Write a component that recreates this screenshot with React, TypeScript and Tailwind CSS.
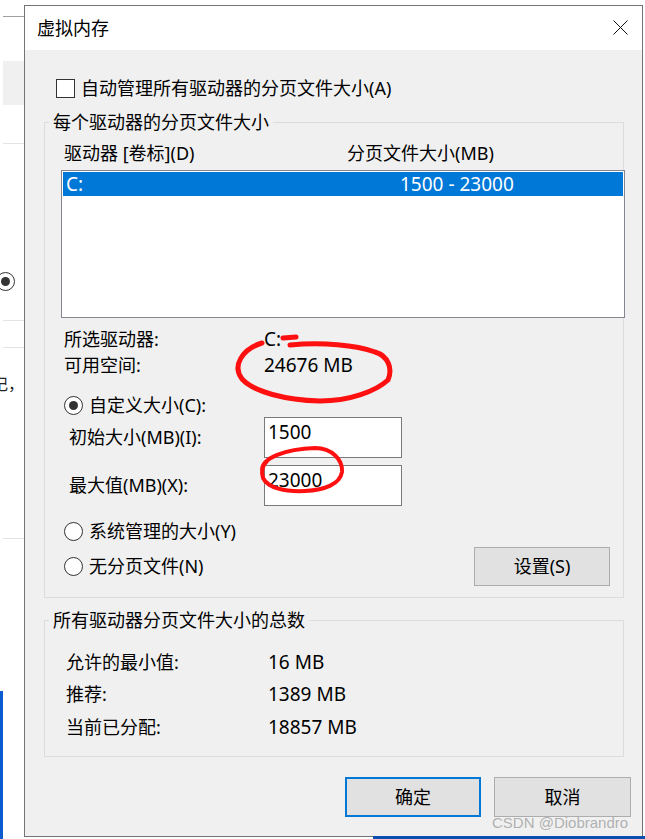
import React from 'react';

const Radio: React.FC<{ checked?: boolean }> = ({ checked }) => (
  <span className="flex h-[19px] w-[19px] shrink-0 items-center justify-center rounded-full border border-[#333] bg-white">
    {checked && <span className="h-[9px] w-[9px] rounded-full bg-[#333]" />}
  </span>
);

const GroupLabel: React.FC<{ children: React.ReactNode }> = ({ children }) => (
  <span className="absolute left-[4px] top-[-13px] bg-[#f0f0f0] px-[4px] leading-[24px]">{children}</span>
);

// background window peeking out on the left
const BackgroundStrip = () => (
  <div className="flex h-full w-[24px] shrink-0 flex-col overflow-hidden bg-white">
    <div className="ml-[3px] mt-[16px] h-px bg-[#a0a0a0]" />
    <div className="ml-[3px] mt-[44px] h-[44px] bg-[#f0f0f0]" />
    <div className="ml-[3px] mt-[38px] h-px bg-[#e3e3e3]" />
    <div className="ml-[-4px] mt-[128px] flex h-[19px] items-center">
      <Radio checked />
    </div>
    <div className="ml-[3px] mt-[29px] h-px bg-[#e3e3e3]" />
    <div className="ml-[3px] mt-[26px] h-px bg-[#e3e3e3]" />
    <div className="mt-[26px] flex h-[20px] justify-end whitespace-nowrap text-[16px] leading-[20px] text-[#222]">记，</div>
    <div className="ml-[3px] mt-[144px] h-px bg-[#e3e3e3]" />
    <div className="mt-[152px] w-[3px] flex-1 bg-[#0b5cd0]" />
  </div>
);

const Dialog = () => (
  <div className="mt-[5px] flex h-[832px] w-[619px] shrink-0 flex-col border border-[#747474] bg-[#f0f0f0]">
    {/* title bar */}
    <div className="flex h-[44px] shrink-0 items-center justify-between bg-white pl-[12px] pr-[14px]">
      <span className="leading-[24px]">虚拟内存</span>
      <svg width="15" height="15" viewBox="0 0 15 15" className="mb-[2px]">
        <path d="M0.5 0.5 L14.5 14.5 M14.5 0.5 L0.5 14.5" stroke="#111" strokeWidth="1" />
      </svg>
    </div>

    <div className="flex flex-col pl-[19px]">
      <div className="ml-[12px] mt-[26px] flex h-[24px] items-center gap-[6px]">
        <span className="h-[19px] w-[19px] border border-[#333] bg-white" />
        <span>自动管理所有驱动器的分页文件大小(A)</span>
      </div>

      {/* per drive group */}
      <div className="relative mt-[22px] flex h-[476px] w-[580px] flex-col border border-[#dcdcdc]">
        <GroupLabel>每个驱动器的分页文件大小</GroupLabel>
        <div className="mt-[18px] flex h-[24px] items-center pl-[19px]">
          <span className="w-[283px]">驱动器 [卷标](D)</span>
          <span>分页文件大小(MB)</span>
        </div>
        <div className="ml-[16px] mt-[5px] h-[148px] w-[564px] border border-[#828790] bg-white p-px">
          <div className="flex h-[24px] items-center bg-[#0078d7] pl-[3px] text-white">
            <span className="w-[334px] text-[19px]">C:</span>
            <span className="text-[19px]">1500 - 23000</span>
          </div>
        </div>

        <div className="mt-[8px] flex h-[26px] items-center pl-[19px]">
          <span className="w-[200px]">所选驱动器:</span>
          <span className="text-[19px]">C:</span>
        </div>
        <div className="flex h-[26px] items-center pl-[19px]">
          <span className="w-[200px]">可用空间:</span>
          <span className="text-[19px]">24676 MB</span>
        </div>

        <div className="mt-[16px] flex h-[22px] items-center gap-[6px] pl-[19px]">
          <Radio checked />
          <span>自定义大小(C):</span>
        </div>
        <div className="mt-px flex h-[41px] items-center pl-[24px]">
          <span className="w-[195px]">初始大小(MB)(I):</span>
          <div className="h-[41px] w-[138px] border border-[#7a7a7a] bg-white pl-[3px] pt-[2px] text-[19px] leading-[24px]">1500</div>
        </div>
        <div className="mt-[7px] flex h-[41px] items-center pl-[24px]">
          <span className="w-[195px]">最大值(MB)(X):</span>
          <div className="h-[41px] w-[138px] border border-[#7a7a7a] bg-white pl-[3px] pt-[2px] text-[19px] leading-[24px]">23000</div>
        </div>

        <div className="mt-[12px] flex h-[26px] items-center gap-[6px] pl-[19px]">
          <Radio />
          <span>系统管理的大小(Y)</span>
        </div>
        <div className="mt-[3px] flex h-[39px] items-center justify-between pl-[19px] pr-[13px]">
          <div className="flex items-center gap-[6px]">
            <Radio />
            <span>无分页文件(N)</span>
          </div>
          <button className="flex h-[39px] w-[136px] items-center justify-center border border-[#adadad] bg-[#e1e1e1]">
            设置(S)
          </button>
        </div>
      </div>

      {/* totals group */}
      <div className="relative mt-[22px] flex h-[137px] w-[580px] flex-col border border-[#dcdcdc]">
        <GroupLabel>所有驱动器分页文件大小的总数</GroupLabel>
        <div className="mt-[25px] flex h-[32px] items-center pl-[21px]">
          <span className="w-[202px]">允许的最小值:</span>
          <span className="text-[19px]">16 MB</span>
        </div>
        <div className="flex h-[33px] items-center pl-[21px]">
          <span className="w-[202px]">推荐:</span>
          <span className="text-[19px]">1389 MB</span>
        </div>
        <div className="flex h-[33px] items-center pl-[21px]">
          <span className="w-[202px]">当前已分配:</span>
          <span className="text-[19px]">18857 MB</span>
        </div>
      </div>

      <div className="mt-[20px] flex h-[40px] justify-end gap-[13px] pr-[11px]">
        <button className="flex h-[40px] w-[136px] items-center justify-center border-2 border-[#0078d7] bg-[#e1e1e1]">确定</button>
        <button className="flex h-[40px] w-[137px] items-center justify-center border border-[#adadad] bg-[#e1e1e1]">取消</button>
      </div>
    </div>
  </div>
);

export default function App() {
  return (
    <div className="relative flex h-[839px] w-[645px] overflow-hidden bg-white font-['Noto_Sans','Noto_Sans_CJK_SC',sans-serif] text-[18px] text-black">
      <BackgroundStrip />
      <Dialog />

      {/* hand drawn red marks */}
      <svg className="pointer-events-none absolute left-0 top-0" width="645" height="839" viewBox="0 0 645 839" fill="none">
        <g stroke="#ff1010" strokeWidth="5" strokeLinecap="round" strokeLinejoin="round">
          <path d="M283 338 L296 337" />
          <path d="M262 343 C242 349 232 366 242 379 C254 392 285 400 320 401 C350 401 376 391 388 380 C393 368 388 356 375 352 C356 345 322 342 290 345" />
          <path d="M262 470 C262 458 285 449 315 448 C332 448 343 460 342 472 C340 484 325 490 305 491 C285 492 268 488 263 478 C261 472 262 466 267 461" strokeWidth="4" />
        </g>
      </svg>

      <div className="absolute bottom-0 left-[373px] right-0 h-[3px] bg-[#0c4fae]" />
      <span className="pointer-events-none absolute left-[492px] top-[814px] font-['Liberation_Sans',sans-serif] text-[15px] leading-[18px] text-[#a8a8a8]/90">
        CSDN @Diobrandro
      </span>
    </div>
  );
}
